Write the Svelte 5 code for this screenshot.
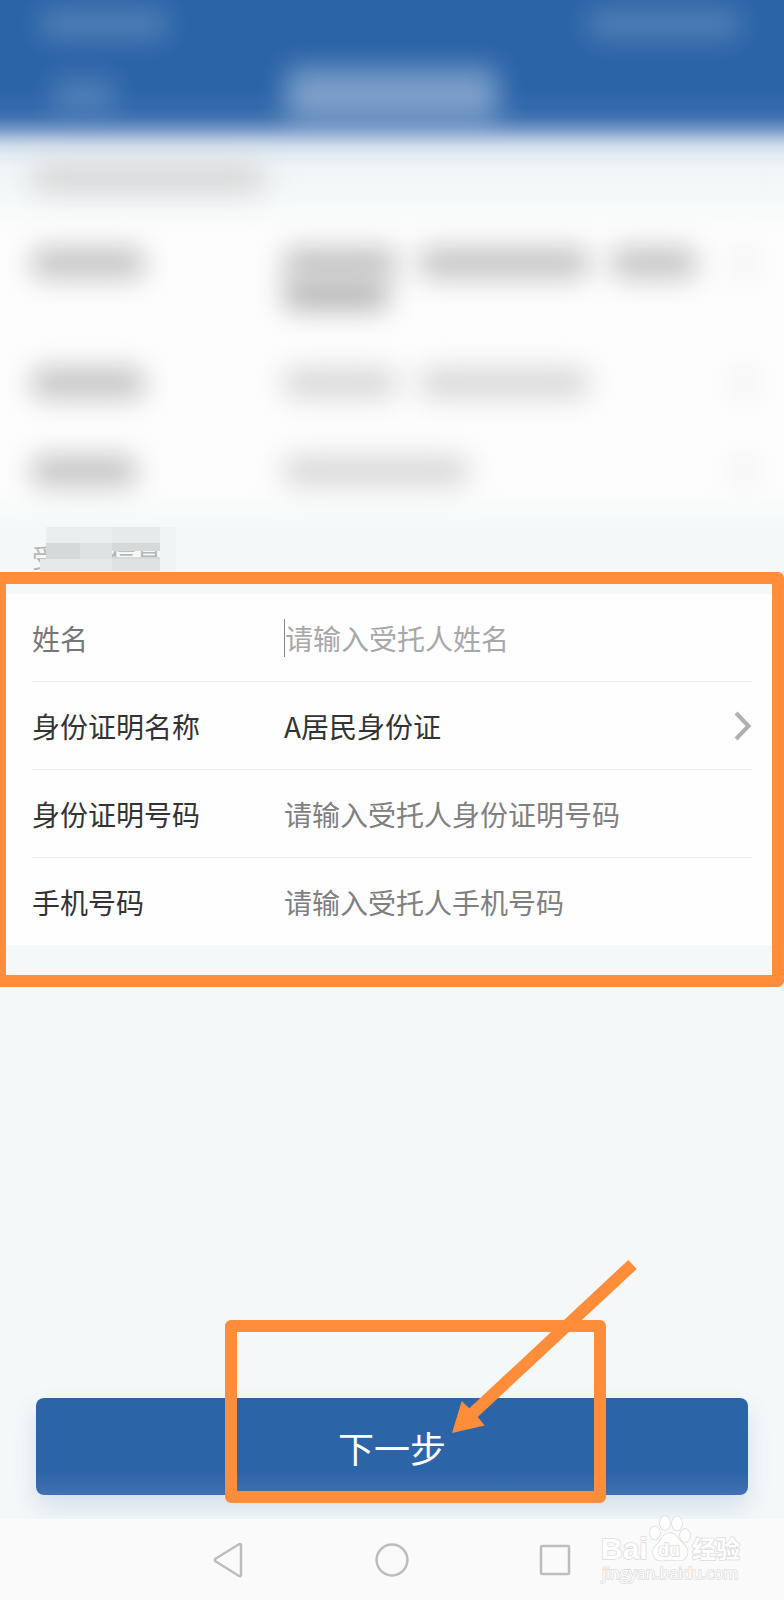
<script lang="ts">
	interface Bar {
		width: number;
		tone: 'dark' | 'mid' | 'light';
	}

	interface HiddenRow {
		label: number;
		lines: Bar[][];
	}

	// Personal details are masked, so these rows only carry bar widths.
	const hiddenRows: HiddenRow[] = [
		{
			label: 112,
			lines: [
				[
					{ width: 112, tone: 'mid' },
					{ width: 168, tone: 'mid' },
					{ width: 84, tone: 'mid' }
				],
				[{ width: 104, tone: 'dark' }]
			]
		},
		{
			label: 112,
			lines: [
				[
					{ width: 112, tone: 'light' },
					{ width: 168, tone: 'light' }
				]
			]
		},
		{ label: 104, lines: [[{ width: 184, tone: 'light' }]] }
	];

	let name = $state('');
	let idType = $state('A');
	let idNumber = $state('');
	let phone = $state('');
</script>

<div class="page">
	<div class="masked" aria-hidden="true">
		<div class="status-bar">
			<span class="smudge faint" style:width="128px"></span>
			<span class="smudge faint" style:width="152px"></span>
		</div>
		<div class="title-bar">
			<span class="smudge faint" style:width="64px"></span>
			<span class="smudge title" style:width="212px"></span>
			<span></span>
		</div>
		<div class="caption">
			<span class="smudge light" style:width="232px"></span>
		</div>
		<div class="hidden-panel">
			{#each hiddenRows as row}
				<div class="hidden-row">
					<div><span class="smudge mid" style:width={`${row.label}px`}></span></div>
					<div class="lines">
						{#each row.lines as line}
							<div class="line">
								{#each line as bar}
									<span class={`smudge ${bar.tone}`} style:width={`${bar.width}px`}></span>
								{/each}
							</div>
						{/each}
					</div>
					<span class="smudge ghost" style:width="16px"></span>
				</div>
			{/each}
		</div>
	</div>

	<form onsubmit={(e) => e.preventDefault()}>
		<section class="agent">
			<h2>
				受托人信息
				<svg class="mosaic" viewBox="0 0 176 44" aria-hidden="true">
					<rect x="14" y="0" width="114" height="16" fill="#ebeeef" />
					<rect x="80" y="0" width="48" height="16" fill="#e7eaeb" />
					<rect x="128" y="0" width="16" height="44" fill="#f0f4f5" />
					<rect x="14" y="16" width="34" height="16" fill="#d6d9d9" />
					<rect x="48" y="16" width="32" height="16" fill="#dfe2e2" />
					<rect x="80" y="16" width="48" height="8" fill="#d6d9d9" />
					<rect x="80" y="30" width="48" height="2" fill="#d6d9d9" />
					<rect x="8" y="32" width="72" height="12" fill="#e5e8e9" />
					<rect x="80" y="32" width="48" height="12" fill="#dfe2e3" />
				</svg>
			</h2>

			<div class="panel">
				<div class="row">
					<label class="soft" for="name">姓名</label>
					<input id="name" class="active" type="text" placeholder="请输入受托人姓名" bind:value={name} />
				</div>
				<div class="row">
					<label for="id-type">身份证明名称</label>
					<div class="picker">
						<select id="id-type" bind:value={idType}>
							<option value="A">A居民身份证</option>
						</select>
						<svg viewBox="0 0 18 30" aria-hidden="true">
							<path d="M2 2 14.500 15 2 28" fill="none" stroke="#b1b1b1" stroke-width="4" />
						</svg>
					</div>
				</div>
				<div class="row">
					<label for="id-number">身份证明号码</label>
					<input
						id="id-number"
						type="text"
						placeholder="请输入受托人身份证明号码"
						bind:value={idNumber}
					/>
				</div>
				<div class="row">
					<label for="phone">手机号码</label>
					<input id="phone" type="tel" placeholder="请输入受托人手机号码" bind:value={phone} />
				</div>
			</div>
			<div class="frame"></div>
		</section>

		<div class="actions">
			<button class="next" type="submit">下一步</button>
			<div class="frame small"></div>
			<svg class="arrow" viewBox="0 0 188 176" aria-hidden="true">
				<path d="M0 176 9.700 144 17.300 151.300 176.300 3 184.700 12 25.700 160 32.700 168.500Z" fill="#ff8d3a" />
			</svg>
		</div>
	</form>

	<nav>
		<button type="button" aria-label="返回">
			<svg viewBox="0 0 36 36">
				<path d="M30 2.800v30.500q-.5 1.500-2 .7L4.500 19.300q-1.500-1.300 0-2.600L28 2.300q1.500-.8 2 .5Z" />
			</svg>
		</button>
		<button type="button" aria-label="主页">
			<svg viewBox="0 0 36 36"><circle cx="18" cy="18" r="15.400" /></svg>
		</button>
		<button type="button" aria-label="最近任务">
			<svg viewBox="0 0 36 36"><rect x="4" y="4" width="28" height="28" rx="1" /></svg>
		</button>

		<svg class="watermark" viewBox="0 0 148 72" aria-hidden="true">
			<g class="logo">
				<text x="1" y="47" class="latin">Bai</text>
				<ellipse cx="55" cy="21" rx="5" ry="6.500" />
				<ellipse cx="65" cy="11" rx="5" ry="7" />
				<ellipse cx="77" cy="11.500" rx="5" ry="7" />
				<ellipse cx="85" cy="23.500" rx="5" ry="6.500" />
				<path
					d="M69.500 21c5 0 7 4 11 8 5 5 8 8 7 12-1 6-5 8-10 7.500-5-1-9-1-14 0-5 .5-9-1-10.500-6-1-5 2-8 6-12 3-4 5-9.500 10.500-9.500Z"
				/>
				<text x="58" y="44" class="du">du</text>
				<text x="92" y="46" class="cjk">经验</text>
				<text x="2" y="67" class="url">jingyan.baidu.com</text>
			</g>
		</svg>
	</nav>
</div>

<style>
	:global(body) {
		margin: 0;
		background: #f4f8f9;
	}

	.page {
		display: flex;
		flex-direction: column;
		min-height: 100vh;
		overflow: hidden;
		background: #f4f8f9;
		font-family: 'Noto Sans CJK SC', sans-serif;
		font-size: 28px;
		color: #333;
	}

	.masked {
		padding-bottom: 12px;
		background: linear-gradient(
			#2b64a7 0,
			#2b64a7 88px,
			#336aac 108px,
			#4475b2 118px,
			#6f93c5 128px,
			#a9bfdc 138px,
			#cfdcea 146px,
			#e4edf2 156px,
			#f0f5f7 168px,
			#f4f8f9 192px,
			#fdfdfd 236px,
			#fdfdfd 488px,
			#f4f8f9 528px
		);
	}

	.smudge {
		display: block;
		height: 28px;
		border-radius: 8px;
		filter: blur(14px);
	}

	.faint {
		background: rgba(255, 255, 255, 0.2);
	}

	.title {
		height: 52px;
		background: rgba(255, 255, 255, 0.38);
	}

	.dark {
		background: #b0b0b0;
	}

	.mid {
		background: #bebebe;
	}

	.light {
		background: #d5d5d5;
	}

	.ghost {
		background: #ebebeb;
	}

	.status-bar {
		display: flex;
		justify-content: space-between;
		align-items: center;
		height: 48px;
		padding: 0 44px 0 40px;
	}

	.title-bar {
		display: grid;
		grid-template-columns: 1fr auto 1fr;
		align-items: center;
		height: 92px;
		padding: 0 52px;
	}

	.caption {
		display: flex;
		align-items: center;
		height: 75px;
		padding: 0 32px;
	}

	.hidden-panel {
		padding: 4px 32px 0;
	}

	.hidden-row {
		display: grid;
		grid-template-columns: 252px 1fr 16px;
		padding: 30px 0;
	}

	.lines {
		display: flex;
		flex-direction: column;
		gap: 4px;
	}

	.line {
		display: flex;
		gap: 24px;
	}

	form {
		display: flex;
		flex: 1;
		flex-direction: column;
		justify-content: space-between;
	}

	.agent {
		position: relative;
		padding-bottom: 42px;
	}

	h2 {
		position: relative;
		height: 67px;
		margin: 0;
		padding: 0 32px;
		font-size: 26px;
		font-weight: 400;
		line-height: 60px;
		color: #b4b7b8;
	}

	.mosaic {
		position: absolute;
		left: 32px;
		top: 0;
		width: 176px;
		height: 44px;
	}

	.panel {
		padding: 0 32px;
		background: #fefefe;
	}

	.row {
		display: grid;
		grid-template-columns: 252px 1fr;
		align-items: center;
		min-height: 87px;
	}

	.row + .row {
		border-top: 1px solid #ececec;
	}

	.soft {
		color: #777;
	}

	input,
	select {
		box-sizing: border-box;
		width: 100%;
		height: 38px;
		margin: 0;
		padding: 0;
		border: 0;
		outline: 0;
		border-radius: 0;
		background: none;
		appearance: none;
		font: inherit;
		line-height: 38px;
		color: inherit;
	}

	input::placeholder {
		color: #808080;
		opacity: 1;
	}

	input.active {
		border-left: 1px solid #888;
	}

	input.active::placeholder {
		color: #a8a8a8;
	}

	.picker {
		display: flex;
		align-items: center;
	}

	.picker svg {
		flex: none;
		width: 18px;
		height: 30px;
	}

	.frame {
		position: absolute;
		inset: 45px 0 0 -6px;
		border: 12px solid #ff8d3a;
		border-radius: 6px;
		pointer-events: none;
	}

	.actions {
		position: relative;
		padding: 0 36px 24px;
	}

	.next {
		display: block;
		width: 100%;
		height: 97px;
		padding: 0;
		border: 0;
		border-radius: 8px;
		background: linear-gradient(#2b64a7 75%, #3f72b0);
		box-shadow: 0 12px 24px rgba(43, 100, 168, 0.16);
		font: inherit;
		font-size: 36px;
		line-height: 48px;
		color: #fff;
	}

	.frame.small {
		inset: -78px calc(50% - 214px) 16px calc(50% - 167px);
	}

	.arrow {
		position: absolute;
		left: calc(50% + 60px);
		bottom: 86px;
		width: 188px;
		height: 176px;
		pointer-events: none;
	}

	nav {
		position: relative;
		display: flex;
		justify-content: center;
		gap: 127px;
		height: 81px;
		background: #fafafa;
	}

	nav button {
		display: grid;
		place-items: center;
		width: 36px;
		padding: 0;
		border: 0;
		background: none;
	}

	nav button svg {
		width: 36px;
		height: 36px;
		fill: none;
		stroke: #bdbdbd;
		stroke-width: 2.5px;
	}

	.watermark {
		position: absolute;
		right: 36px;
		bottom: 16px;
		width: 148px;
		height: 72px;
	}

	.logo {
		fill: #fefefe;
		stroke: #d9dcdd;
		stroke-width: 1.5px;
		paint-order: stroke;
	}

	.latin {
		font: 700 30px 'Liberation Sans', sans-serif;
	}

	.du {
		font: 700 18px 'Liberation Sans', sans-serif;
	}

	.cjk {
		font: 700 24px 'Noto Sans CJK SC', sans-serif;
	}

	.url {
		font: 400 16px 'Open Sans', sans-serif;
	}
</style>
